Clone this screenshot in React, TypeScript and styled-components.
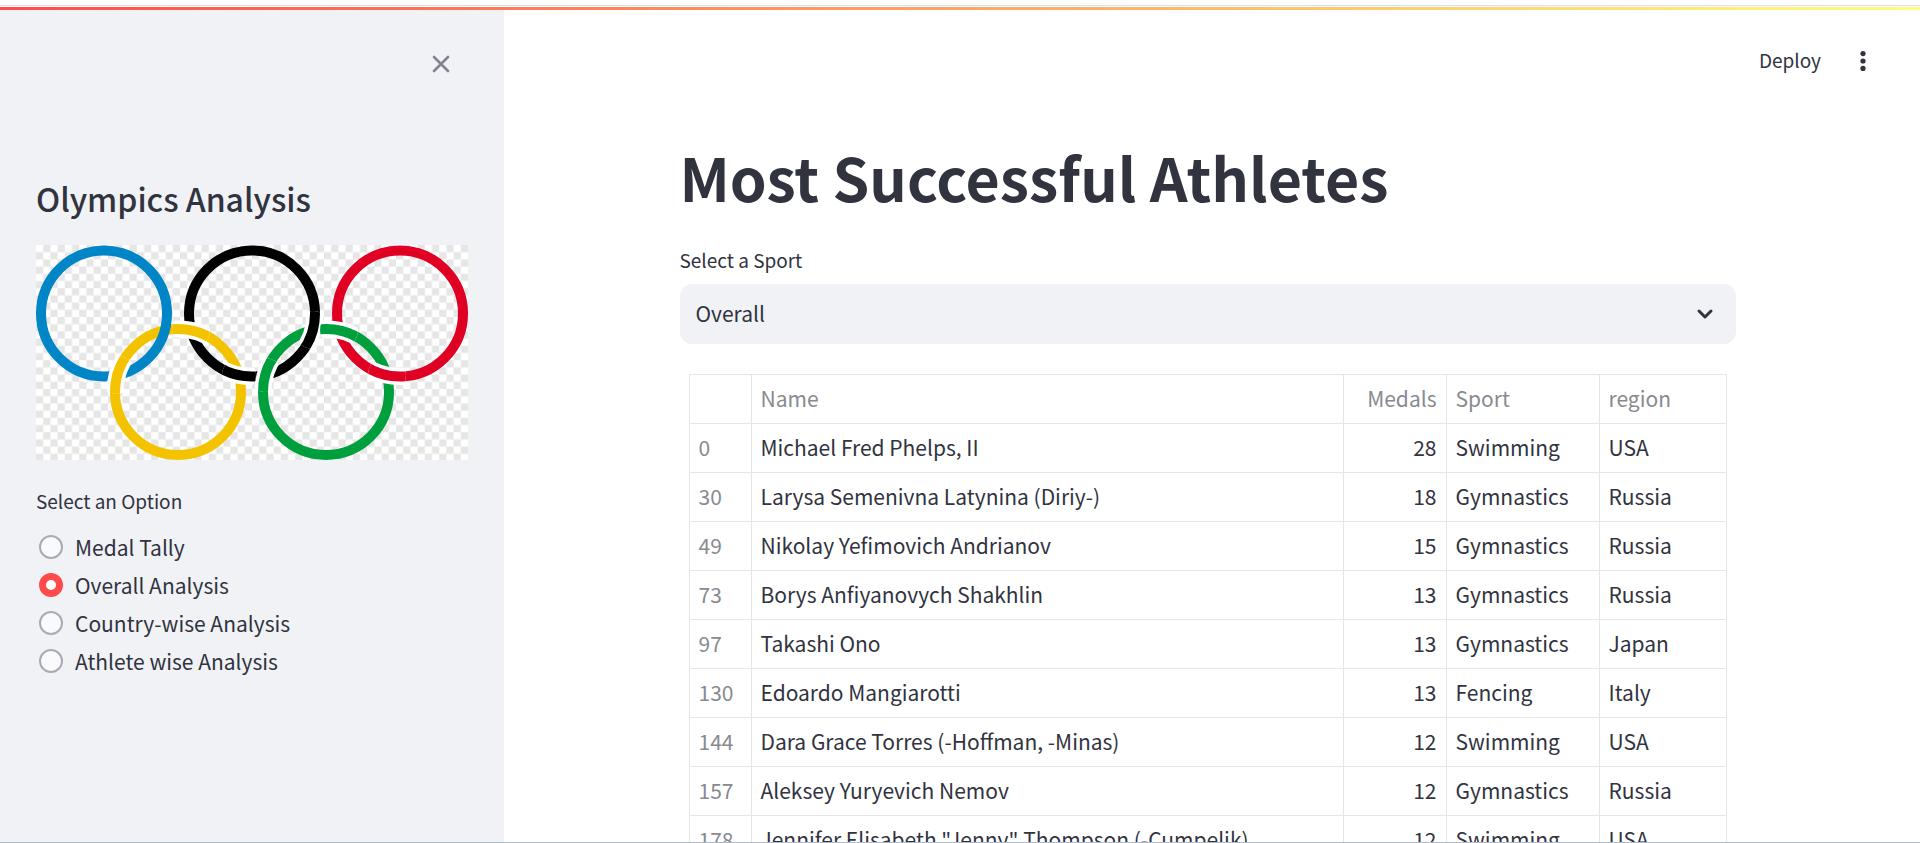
import React, { useState } from "react";
import styled, { createGlobalStyle } from "styled-components";

const ink = "#31333f";
const panel = "#f0f2f6";

const GlobalStyle = createGlobalStyle`
  *, *::before, *::after { box-sizing: border-box; }
  body {
    margin: 0;
    background: #ffffff;
    color: ${ink};
    font-family: "Source Sans Pro", "Noto Sans CJK SC", sans-serif;
    font-size: 21px;
    line-height: 32px;
  }
  button, select, input { font: inherit; color: inherit; }
`;

const Page = styled.div`
  display: flex;
  flex-direction: column;
  height: 100vh;
  overflow: hidden;
  border-bottom: 1px solid #b1b8c6;
`;

const TopEdge = styled.div`
  flex: none;
  height: 6px;
  border-bottom: 1px solid #e0e0e4;
  margin-bottom: 1px;
`;

const Decoration = styled.div`
  flex: none;
  height: 3px;
  background: linear-gradient(90deg, #ff4b4b, #fffd80);
`;

const Shell = styled.div`
  flex: 1;
  min-height: 0;
  display: flex;
`;

const Sidebar = styled.aside`
  flex: none;
  width: 504px;
  padding: 36px;
  background: ${panel};
`;

const SidebarHeader = styled.div`
  display: flex;
  justify-content: flex-end;
  height: 130px;
`;

const IconButton = styled.button`
  display: flex;
  align-items: center;
  justify-content: center;
  width: 36px;
  height: 36px;
  padding: 0;
  border: 0;
  background: none;
  cursor: pointer;
`;

const CloseButton = styled(IconButton)`
  margin-right: 9px;
  color: #808495;
`;

const SidebarTitle = styled.h2`
  margin: 0 0 25px;
  font-size: 32px;
  font-weight: 500;
  line-height: 44px;
`;

const Logo = styled.svg`
  display: block;
  width: 100%;
  height: auto;
`;

const RadioGroup = styled.fieldset`
  margin: 27px 0 0;
  padding: 0;
  border: 0;
`;

const Legend = styled.legend`
  padding: 0;
  margin-bottom: 13px;
  font-size: 19px;
  line-height: 28px;
`;

const RadioLabel = styled.label`
  display: flex;
  align-items: center;
  gap: 12px;
  height: 38px;
  padding-left: 3px;
  cursor: pointer;
`;

const Radio = styled.input`
  appearance: none;
  flex: none;
  width: 24px;
  height: 24px;
  margin: 0;
  border: 2px solid #a9abb3;
  border-radius: 50%;
  background: #fafafc;

  &:checked {
    border: 7px solid #ff4b4b;
    background: #ffffff;
  }
`;

const Main = styled.main`
  flex: 1;
  min-width: 0;
  padding-right: 9px;
`;

const Toolbar = styled.header`
  display: flex;
  justify-content: flex-end;
  align-items: center;
  gap: 24px;
  height: 102px;
  padding: 0 30px 0 0;
`;

const DeployButton = styled.button`
  padding: 0 0 2px;
  border: 0;
  background: none;
  font-size: 19px;
  line-height: 28px;
  cursor: pointer;
`;

const Content = styled.div`
  max-width: 1056px;
  margin: 0 auto;
  padding-top: 25px;
`;

const Title = styled.h1`
  margin: 0 0 29px;
  font-size: 59px;
  font-weight: 700;
  line-height: 80px;
`;

const FieldLabel = styled.label`
  display: block;
  margin-bottom: 10px;
  font-size: 19px;
  line-height: 28px;
`;

const SelectWrap = styled.div`
  display: grid;
  align-items: center;

  > * { grid-area: 1 / 1; }

  > svg {
    justify-self: end;
    margin-right: 18px;
    pointer-events: none;
  }
`;

const Select = styled.select`
  appearance: none;
  width: 100%;
  height: 60px;
  padding: 0 48px 2px 16px;
  border: 0;
  border-radius: 12px;
  background: ${panel};
`;

const Table = styled.table`
  width: calc(100% - 18px);
  margin: 30px 9px 0;
  border-collapse: collapse;
  table-layout: fixed;
`;

const Column = styled.col<{ $width?: number }>`
  width: ${({ $width }) => ($width ? `${$width}px` : "auto")};
`;

const Cell = styled.td<{ $right?: boolean }>`
  height: 49px;
  padding: 0 9px 2px;
  border: 1px solid #e6e6e9;
  text-align: ${({ $right }) => ($right ? "right" : "left")};
  white-space: nowrap;
`;

const HeadCell = styled(Cell)`
  color: #888a91;
  font-weight: 400;
`;

const RING = 63;
const rings = {
  blue: { cx: 68, cy: 68.5, color: "#0085c7" },
  black: { cx: 216, cy: 68.5, color: "#000000" },
  red: { cx: 364, cy: 68.5, color: "#e00024" },
  yellow: { cx: 142, cy: 147, color: "#f4c300" },
  green: { cx: 290, cy: 147, color: "#009f3d" },
};

type RingName = keyof typeof rings;

/* Where one ring passes over another, with a white gap on both sides. */
const crossings: { over: RingName; x: number; y: number; reach: number }[] = [
  { over: "yellow", x: 81, y: 130, reach: 19 },
  { over: "yellow", x: 155, y: 85, reach: 19 },
  { over: "black", x: 203, y: 130, reach: 17 },
  { over: "green", x: 229, y: 130, reach: 17 },
  { over: "black", x: 277, y: 85, reach: 19 },
  { over: "green", x: 303, y: 85, reach: 19 },
  { over: "red", x: 351, y: 130, reach: 19 },
];

function Ring({ name, halo, clip }: { name: RingName; halo?: boolean; clip?: string }) {
  const { cx, cy, color } = rings[name];
  return (
    <g fill="none" clipPath={clip && `url(#${clip})`}>
      {halo && <circle cx={cx} cy={cy} r={RING} stroke="#ffffff" strokeWidth={17} />}
      <circle cx={cx} cy={cy} r={RING} stroke={color} strokeWidth={10} />
    </g>
  );
}

function OlympicRings() {
  return (
    <Logo viewBox="0 0 432 215" role="img" aria-label="Olympic rings">
      <defs>
        <pattern id="checks" width="14.4" height="14.4" patternUnits="userSpaceOnUse">
          <rect width="14.4" height="14.4" fill="#ffffff" />
          <rect x="7.2" width="7.2" height="7.2" fill="#e6e6e6" />
          <rect y="7.2" width="7.2" height="7.2" fill="#e6e6e6" />
        </pattern>
        {crossings.map(({ x, y, reach }, i) => (
          <clipPath id={`crossing${i}`} key={i}>
            <circle cx={x} cy={y} r={reach} />
          </clipPath>
        ))}
      </defs>
      <rect width="432" height="215" fill="url(#checks)" />
      <Ring name="black" />
      <Ring name="red" />
      <Ring name="yellow" />
      <Ring name="green" />
      <Ring name="blue" />
      {crossings.map(({ over }, i) => (
        <Ring key={i} name={over} halo clip={`crossing${i}`} />
      ))}
    </Logo>
  );
}

const options = ["Medal Tally", "Overall Analysis", "Country-wise Analysis", "Athlete wise Analysis"];

const athletes: [number, string, number, string, string][] = [
  [0, "Michael Fred Phelps, II", 28, "Swimming", "USA"],
  [30, "Larysa Semenivna Latynina (Diriy-)", 18, "Gymnastics", "Russia"],
  [49, "Nikolay Yefimovich Andrianov", 15, "Gymnastics", "Russia"],
  [73, "Borys Anfiyanovych Shakhlin", 13, "Gymnastics", "Russia"],
  [97, "Takashi Ono", 13, "Gymnastics", "Japan"],
  [130, "Edoardo Mangiarotti", 13, "Fencing", "Italy"],
  [144, "Dara Grace Torres (-Hoffman, -Minas)", 12, "Swimming", "USA"],
  [157, "Aleksey Yuryevich Nemov", 12, "Gymnastics", "Russia"],
  [178, 'Jennifer Elisabeth "Jenny" Thompson (-Cumpelik)', 12, "Swimming", "USA"],
];

export default function App() {
  const [option, setOption] = useState(options[1]);

  return (
    <Page>
      <GlobalStyle />
      <TopEdge />
      <Decoration />
      <Shell>
        <Sidebar>
          <SidebarHeader>
            <CloseButton aria-label="Close sidebar">
              <svg width="18" height="18" viewBox="0 0 18 18" fill="none" stroke="currentColor" strokeWidth="2.6" strokeLinecap="round">
                <path d="M2 2l14 14M16 2L2 16" />
              </svg>
            </CloseButton>
          </SidebarHeader>
          <SidebarTitle>Olympics Analysis</SidebarTitle>
          <OlympicRings />
          <RadioGroup>
            <Legend>Select an Option</Legend>
            {options.map((name) => (
              <RadioLabel key={name}>
                <Radio type="radio" name="option" checked={option === name} onChange={() => setOption(name)} />
                {name}
              </RadioLabel>
            ))}
          </RadioGroup>
        </Sidebar>
        <Main>
          <Toolbar>
            <DeployButton>Deploy</DeployButton>
            <IconButton aria-label="Main menu">
              <svg width="6" height="20" viewBox="0 0 6 20" fill="currentColor">
                <circle cx="3" cy="2.6" r="2.6" />
                <circle cx="3" cy="10" r="2.6" />
                <circle cx="3" cy="17.4" r="2.6" />
              </svg>
            </IconButton>
          </Toolbar>
          <Content>
            <Title>Most Successful Athletes</Title>
            <FieldLabel htmlFor="sport">Select a Sport</FieldLabel>
            <SelectWrap>
              <Select id="sport" defaultValue="Overall">
                <option>Overall</option>
                <option>Swimming</option>
                <option>Gymnastics</option>
                <option>Fencing</option>
              </Select>
              <svg width="26" height="26" viewBox="0 0 26 26" fill="none" stroke="currentColor" strokeWidth="3" strokeLinecap="round" strokeLinejoin="round">
                <path d="M7 10l6 6 6-6" />
              </svg>
            </SelectWrap>
            <Table>
              <colgroup>
                <Column $width={62} />
                <Column />
                <Column $width={103} />
                <Column $width={153} />
                <Column $width={127} />
              </colgroup>
              <thead>
                <tr>
                  <HeadCell as="th" aria-label="Index" />
                  <HeadCell as="th" scope="col">Name</HeadCell>
                  <HeadCell as="th" scope="col" $right>Medals</HeadCell>
                  <HeadCell as="th" scope="col">Sport</HeadCell>
                  <HeadCell as="th" scope="col">region</HeadCell>
                </tr>
              </thead>
              <tbody>
                {athletes.map(([id, name, medals, sport, region]) => (
                  <tr key={id}>
                    <HeadCell as="th" scope="row">{id}</HeadCell>
                    <Cell>{name}</Cell>
                    <Cell $right>{medals}</Cell>
                    <Cell>{sport}</Cell>
                    <Cell>{region}</Cell>
                  </tr>
                ))}
              </tbody>
            </Table>
          </Content>
        </Main>
      </Shell>
    </Page>
  );
}
